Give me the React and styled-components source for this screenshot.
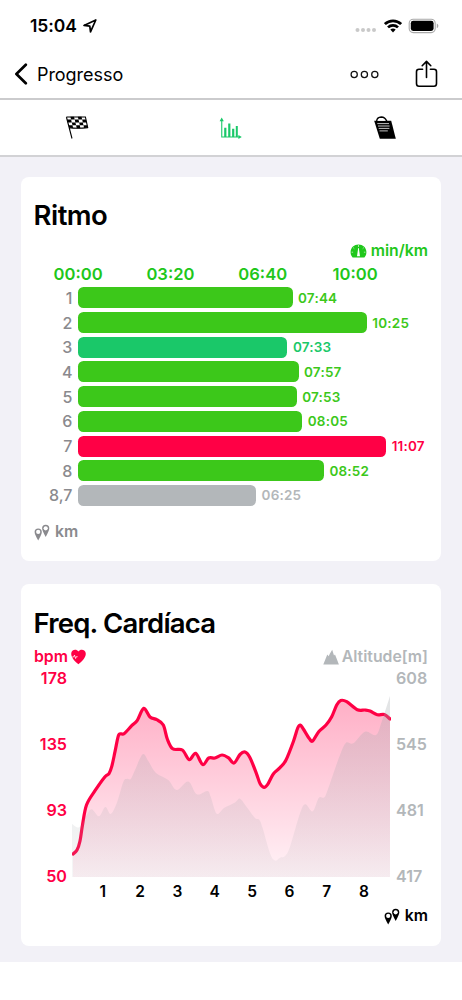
import React from 'react'
import styled, { createGlobalStyle } from 'styled-components'

const GlobalStyle = createGlobalStyle`
    * {
        box-sizing: border-box;
    }
    body {
        margin: 0;
        background-color: #fff;
        color: #000;
        font-family: Inter, "Liberation Sans", sans-serif;
    }
    svg {
        display: block;
        flex: none;
    }
`

const Screen = styled.div`
    width: 462px;
    height: 1000px;
    overflow: hidden;
    display: flex;
    flex-direction: column;
`
const StatusBar = styled.div`
    height: 50px;
    padding: 1px 23px 0 30px;
    display: flex;
    align-items: center;
    justify-content: space-between;
`
const Clock = styled.div`
    display: flex;
    align-items: center;
    gap: 6px;
    font-size: 17.5px;
    font-weight: 600;
    letter-spacing: -0.05px;
`
const StatusIcons = styled.div`
    display: flex;
    align-items: center;
    gap: 6.5px;
`
const NavBar = styled.div`
    height: 50px;
    padding: 1px 24px 1px 14px;
    display: flex;
    align-items: center;
    justify-content: space-between;
    border-bottom: 2px solid #cbcbcd;
`
const NavSide = styled.div`
    display: flex;
    align-items: center;
    gap: ${props => props.$gap}px;
`
const NavTitle = styled.div`
    font-size: 18px;
    letter-spacing: -0.05px;
`
const Tabs = styled.div`
    height: 57px;
    display: grid;
    grid-template-columns: repeat(3, 1fr);
    place-items: center;
    border-bottom: 2px solid #d2d2d5;
`
const Content = styled.div`
    height: 805px;
    padding: 20px 21px 0 21px;
    background-color: #f2f1f7;
    display: flex;
    flex-direction: column;
    gap: 23px;
`
const Card = styled.div`
    height: ${props => props.$height}px;
    padding: ${props => props.$top}px 13px 0 13px;
    background-color: #fff;
    border-radius: 8px;
`
const Title = styled.div`
    height: 34px;
    line-height: 34px;
    margin-left: -0.5px;
    font-size: 27.5px;
    font-weight: 590;
    letter-spacing: ${props => props.$spacing}px;
    white-space: nowrap;
`
const Unit = styled.div`
    display: flex;
    align-items: center;
    gap: ${props => props.$gap}px;
    height: 20px;
    line-height: 20px;
    color: ${props => props.$color};
    font-size: 15.8px;
    font-weight: 575;
`
const UnitRow = styled.div`
    display: flex;
    justify-content: ${props => props.$justify};
    padding-top: ${props => props.$top}px;
`
const Scale = styled.div`
    display: flex;
    height: 26px;
    margin-left: -2px;
    line-height: 26px;
    color: #1fc71b;
    font-size: 16.6px;
    font-weight: 575;
`
const ScaleLabel = styled.div`
    width: 92.3px;
    text-align: center;
`
const Bars = styled.div`
    display: flex;
    flex-direction: column;
    gap: 3.7px;
    padding-top: 0.4px;
`
const BarRow = styled.div`
    display: flex;
    align-items: center;
    height: 21px;
`
const BarLabel = styled.div`
    width: 44.4px;
    padding-right: 6px;
    text-align: right;
    color: #8a8a8e;
    font-size: 16px;
    font-weight: 500;
`
const Bar = styled.div`
    height: 21px;
    border-radius: 5.5px;
    background-color: ${props => props.$color};
`
const BarTime = styled.div`
    padding-left: 5.5px;
    color: ${props => props.$color};
    font-size: 13.5px;
    font-weight: 570;
    letter-spacing: 0.2px;
`
const Chart = styled.div`
    display: flex;
    height: 212px;
    margin-top: 1px;
`
const Axis = styled.div`
    width: ${props => props.$width}px;
    height: 218px;
    padding-left: ${props => props.$left}px;
    display: flex;
    flex-direction: column;
    justify-content: space-between;
    color: ${props => props.$color};
    text-align: ${props => props.$align};
    font-size: 16.1px;
    line-height: 20px;
    font-weight: 575;
`
const Plot = styled.div`
    width: 318px;
    margin: 0 1px 0 5px;
    padding-top: 10px;
`
const KmLabels = styled.div`
    display: flex;
    padding: 5px 0 0 12px;
    font-size: 15.5px;
    line-height: 20px;
    font-weight: 575;
`
const KmLabel = styled.div`
    width: 37.35px;
    text-align: center;
`

const GREEN = '#3cc81a'
const TEAL = '#1ac869'
const RED = '#ff0045'
const GREY = '#b3b7ba'

const laps = [
    { km: '1', time: '07:44', color: GREEN },
    { km: '2', time: '10:25', color: GREEN },
    { km: '3', time: '07:33', color: TEAL },
    { km: '4', time: '07:57', color: GREEN },
    { km: '5', time: '07:53', color: GREEN },
    { km: '6', time: '08:05', color: GREEN },
    { km: '7', time: '11:07', color: RED },
    { km: '8', time: '08:52', color: GREEN },
    { km: '8,7', time: '06:25', color: GREY },
]

const heartRate = [
    [1, 176], [5, 172], [8, 163], [10.5, 147], [14.5, 127], [23, 112.7], [33, 98.7], [37, 95.6],
    [39.7, 88.7], [43, 73.7], [46.3, 58], [49, 55.8], [52.3, 55.5], [59.7, 47.7], [65.3, 42.3],
    [71.7, 30.4], [78, 39], [84.7, 41.7], [91.3, 47], [95.3, 61], [100.7, 70.8], [110.3, 72],
    [117.3, 81.6], [123.7, 75.3], [130.7, 86.6], [136.7, 80], [143, 80], [150, 77], [156.3, 79.7],
    [162, 85], [168, 76.5], [173, 74], [178, 79.7], [184.7, 96.3], [188, 105.5], [192, 109.3],
    [195.7, 106.3], [201.3, 96], [208, 89.7], [214, 82], [221.3, 63.7], [225.7, 50], [228.3, 47],
    [231.3, 51], [237.3, 60.5], [240.7, 63], [246.7, 53.7], [254, 47], [259.7, 38.7], [264.7, 27],
    [268.7, 22.5], [274.7, 23.7], [285.3, 31.7], [293, 32], [298, 33], [305.3, 36.7], [312.3, 36.5],
    [318, 41],
]

const altitude = [
    [0, 146], [7.3, 149.3], [14.7, 137], [19.7, 131.3], [27, 138.3], [33.3, 129], [38.7, 136],
    [44.7, 125.3], [51.3, 104], [54.7, 100.9], [58.7, 101], [63, 92], [70.7, 76.3], [76.3, 83],
    [84, 95], [96.3, 102], [104.7, 112], [116.3, 103.5], [124.7, 116.3], [135.3, 112.9],
    [138.7, 118.7], [144.7, 135.7], [152, 130], [163, 124.5], [168, 120.7], [174.7, 129],
    [183, 140], [187.3, 141.7], [190.7, 150.3], [198, 175.3], [203, 182.6], [208, 179.7],
    [213, 178], [218, 168.7], [228, 135.3], [233.3, 126.2], [240.7, 133.3], [246.7, 119.9],
    [252, 119.6], [255.3, 113], [262, 93.7], [268, 77], [274, 64.7], [281.3, 65.3], [293, 53.7],
    [304, 57], [309.7, 43.7], [318, 18],
]

const seconds = (time) => {
    const [m, s] = time.split(':')
    return Number(m) * 60 + Number(s)
}

// smooth curve going through every point
const curve = (points) => {
    let d = `M${points[0][0]} ${points[0][1]}`
    for (let i = 0; i < points.length - 1; i++) {
        const p0 = points[i - 1] || points[i]
        const p1 = points[i]
        const p2 = points[i + 1]
        const p3 = points[i + 2] || p2
        d += ` C${p1[0] + (p2[0] - p0[0]) / 6} ${p1[1] + (p2[1] - p0[1]) / 6}`
        d += ` ${p2[0] - (p3[0] - p1[0]) / 6} ${p2[1] - (p3[1] - p1[1]) / 6} ${p2[0]} ${p2[1]}`
    }
    return d
}

const LocationIcon = () => (
    <svg width="14" height="14" viewBox="0 0 14 14">
        <path d="M1 6.4 12.8 1 7.5 12.8 6.8 7.1Z" fill="none" stroke="#000" strokeWidth="1.7" strokeLinejoin="round" />
    </svg>
)

const SignalIcon = () => (
    <svg width="22" height="16" viewBox="0 0 22 16" fill="#c9c9c9">
        <circle cx="2.5" cy="12" r="2" />
        <circle cx="8" cy="12" r="2" />
        <circle cx="13.5" cy="12" r="2" />
        <circle cx="19" cy="12" r="2" />
    </svg>
)

const WifiIcon = () => (
    <svg width="18" height="14" viewBox="0 0 18 14">
        <g fill="none" stroke="#000" strokeWidth="2.7">
            <path d="M.9 5.1C5.4.8 12.6.8 17.1 5.1" />
            <path d="M4 8.4C6.8 5.7 11.2 5.7 14 8.4" />
        </g>
        <path d="M6.3 10.6Q9 8.5 11.7 10.6L9 13.4Z" />
    </svg>
)

const BatteryIcon = () => (
    <svg width="31" height="16" viewBox="0 0 31 16">
        <rect x="1.2" y="1.2" width="26" height="13.4" rx="4" fill="none" stroke="#a9a9a9" strokeWidth="1.1" />
        <rect x="2.8" y="2.8" width="22.8" height="10.2" rx="2.4" />
        <path d="M28.8 5.5Q30.4 6.2 30.4 7.8T28.8 10.2Z" fill="#a9a9a9" />
    </svg>
)

const BackIcon = () => (
    <svg width="14" height="22" viewBox="0 0 14 22">
        <path d="M11.8 1.8 2.4 11 11.8 20.2" fill="none" stroke="#000" strokeWidth="2.7" strokeLinecap="round" strokeLinejoin="round" />
    </svg>
)

const MoreIcon = () => (
    <svg width="29" height="9" viewBox="0 0 29 9" fill="none" stroke="#111" strokeWidth="1.25">
        <circle cx="4.2" cy="4.5" r="3.1" />
        <circle cx="14.4" cy="4.5" r="3.1" />
        <circle cx="24.8" cy="4.5" r="3.1" />
    </svg>
)

const ShareIcon = () => (
    <svg width="23" height="28" viewBox="0 0 23 28" fill="none" stroke="#000" strokeWidth="1.6" strokeLinecap="round" strokeLinejoin="round">
        <path d="M7.6 9.2H4Q1.5 9.2 1.5 11.7V23.5Q1.5 26.2 4 26.2H19Q21.5 26.2 21.5 23.5V11.7Q21.5 9.2 19 9.2H15.4" />
        <path d="M11.5 17.4V1.5M7.2 5.7 11.5 1.4 15.8 5.7" />
    </svg>
)

const FlagIcon = () => (
    <svg width="24" height="24" viewBox="0 0 24 24">
        <path d="M1.4 1H20.4L22.7 11.6Q12 13 4 11.6M1.4 1 7 22.5" fill="none" stroke="#000" strokeWidth="1.1" />
        <path d="M5.4 .8H9L9.7 3.6H6.1ZM12.8 .8H16.5L17.2 3.6H13.5ZM2.1 3.6H6.1L6.8 6.4H2.9ZM9.7 3.6H13.5L14.2 6.4H10.4ZM17.2 3.6H20.9L21.5 6.4H17.8ZM6.8 6.4H10.4L11.1 9.2H7.5ZM14.2 6.4H17.8L18.5 9.2H14.8ZM3.6 9.2H7.5L8.1 12.1 4.2 11.4ZM11.1 9.2H14.8L15.4 12.2H11.7ZM18.5 9.2H22.1L22.8 11.6 19.1 12.1Z" />
    </svg>
)

const ChartIcon = () => (
    <svg width="24" height="24" viewBox="0 0 24 24" fill="#1ac869">
        <path d="M2.2 4H3.3V20.4H20V21.5H2.2Z" />
        <path d="M2.7 1.6 4.8 5.2H.6ZM22.8 21 19.4 19V23Z" />
        <path d="M5.2 11.7H7.4V21H5.2ZM9.2 7.6H11.4V21H9.2ZM13.1 12.7H15.3V21H13.1ZM16.8 10H18.8V21H16.8Z" />
    </svg>
)

const ReportIcon = () => (
    <svg width="24" height="24" viewBox="0 0 24 24">
        <path d="M1.2 4.8H18.2L22.8 22.8H6.8Z" />
        <path d="M3.6 5.2Q4 1.2 8.2 1 12.2 1.2 13.8 5.2" fill="none" stroke="#000" strokeWidth="1.3" />
        <path d="M4.6 4.7Q5.2 2.7 8.2 2.7 11.2 2.7 12.5 4.7Z" fill="#fff" />
        <path d="M4.3 7.6H16M5 10H16.6M5.7 12.4H16.4M6.5 14.9H14.8" stroke="#d8d8d8" strokeWidth=".9" />
    </svg>
)

const GaugeIcon = () => (
    <svg width="17" height="17" viewBox="0 0 17 17">
        <path d="M2.6 14.4Q.4 12.2.6 8.8C.8 4.4 4.2 1.4 8.5 1.4S16.2 4.4 16.4 8.8Q16.6 12.2 14.4 14.4Z" fill="#1fc71b" />
        <path d="M8.2 5H8.8L10 13.2H7ZM8.1 2.2H8.9V3.8H8.1Z" fill="#fff" />
        <path d="M3.2 4.6 4.3 5.7M13.8 4.6 12.7 5.7M1.6 9.2H3.1M15.4 9.2H13.9" stroke="#fff" strokeWidth=".6" />
    </svg>
)

const PinsIcon = ({ color }) => (
    <svg width="16" height="17" viewBox="0 0 16 17">
        <path d="M.6 8A3.6 3.6 0 0 1 7.8 8Q7.8 10.4 4.2 16.4.6 10.4.6 8Z" fill={color} />
        <circle cx="4.2" cy="7.9" r="2.1" fill="#fff" />
        <path d="M8.1 4.3A3.6 3.6 0 0 1 15.3 4.3Q15.3 6.7 11.7 12.9 8.1 6.7 8.1 4.3Z" fill={color} />
        <circle cx="11.7" cy="4.3" r="2.1" fill="#fff" />
    </svg>
)

const HeartIcon = () => (
    <svg width="15" height="16" viewBox="0 0 15 16">
        <path d="M7.4 15.3C4.4 12.6.2 9 .2 4.7.2.8 5.3-.7 7.4 2.6 9.6-.7 14.8.8 14.8 4.7 14.8 9 10.4 12.6 7.4 15.3Z" fill={RED} />
        <path d="M1.2 8H2.6L3.5 6.1 4.6 9.5 5.3 7.7H6.6" fill="none" stroke="#fff" strokeWidth=".8" />
    </svg>
)

const MountainIcon = () => (
    <svg width="16" height="16" viewBox="0 0 16 16">
        <path d="M.3 15.5 3.4 7.8 4.3 5.4 5.7 7.2 6.8 4.8 7.6 3.6 9.2.8 10.3 4.2 11 6.6 12 5.6 13.2 8.6 15.9 15.5Z" fill={GREY} />
    </svg>
)

const HeartChart = () => (
    <svg width="319" height="199" viewBox="0 0 319 199">
        <defs>
            <linearGradient id="hr" gradientUnits="userSpaceOnUse" x1="0" y1="22" x2="0" y2="199">
                <stop offset="0" stopColor="#ffafc6" />
                <stop offset="1" stopColor="#fff3f7" />
            </linearGradient>
            <linearGradient id="alt" gradientUnits="userSpaceOnUse" x1="0" y1="18" x2="0" y2="199">
                <stop offset="0" stopColor="#a4a9ad" stopOpacity="0.32" />
                <stop offset="1" stopColor="#a4a9ad" stopOpacity="0.1" />
            </linearGradient>
        </defs>
        <path d={`${curve(heartRate)} V199 H1 Z`} fill="url(#hr)" />
        <path d={curve(heartRate)} fill="none" stroke={RED} strokeWidth="3.2" strokeLinecap="round" />
        <path d={`${curve(altitude)} V199 H0 Z`} fill="url(#alt)" />
    </svg>
)

const PaceCard = () => {
    return (
        <Card $height={384} $top={21}>
            <Title $spacing={-0.5}>Ritmo</Title>
            <UnitRow $justify="flex-end" $top={9}>
                <Unit $color="#1fc71b" $gap={4}><GaugeIcon />min/km</Unit>
            </UnitRow>
            <Scale>
                {['00:00', '03:20', '06:40', '10:00'].map(label => <ScaleLabel key={label}>{label}</ScaleLabel>)}
            </Scale>
            <Bars>
                {laps.map(lap => (
                    <BarRow key={lap.km}>
                        <BarLabel>{lap.km}</BarLabel>
                        <Bar $color={lap.color} style={{ width: `${seconds(lap.time) * 0.4615}px` }} />
                        <BarTime $color={lap.color}>{lap.time}</BarTime>
                    </BarRow>
                ))}
            </Bars>
            <UnitRow $justify="flex-start" $top={16.3}>
                <Unit $color="#8a8a8e" $gap={5}><PinsIcon color="#8a8a8e" />km</Unit>
            </UnitRow>
        </Card>
    )
}

const HeartCard = () => {
    return (
        <Card $height={362} $top={22}>
            <Title $spacing={-0.8}>Freq. Cardíaca</Title>
            <UnitRow $justify="space-between" $top={7}>
                <Unit $color={RED} $gap={3}>bpm<HeartIcon /></Unit>
                <Unit $color={GREY} $gap={3}><MountainIcon />Altitude[m]</Unit>
            </UnitRow>
            <Chart>
                <Axis $width={33} $left={0} $align="right" $color={RED}>
                    <div>178</div>
                    <div>135</div>
                    <div>93</div>
                    <div>50</div>
                </Axis>
                <Plot>
                    <HeartChart />
                    <KmLabels>
                        {[1, 2, 3, 4, 5, 6, 7, 8].map(km => <KmLabel key={km}>{km}</KmLabel>)}
                    </KmLabels>
                </Plot>
                <Axis $width={37} $left={5} $align="left" $color={GREY}>
                    <div>608</div>
                    <div>545</div>
                    <div>481</div>
                    <div>417</div>
                </Axis>
            </Chart>
            <UnitRow $justify="flex-end" $top={26}>
                <Unit $color="#000" $gap={5}><PinsIcon color="#000" />km</Unit>
            </UnitRow>
        </Card>
    )
}

const App = () => {
    return (
        <Screen>
            <GlobalStyle />
            <StatusBar>
                <Clock>15:04<LocationIcon /></Clock>
                <StatusIcons>
                    <SignalIcon />
                    <WifiIcon />
                    <BatteryIcon />
                </StatusIcons>
            </StatusBar>
            <NavBar>
                <NavSide $gap={9}>
                    <BackIcon />
                    <NavTitle>Progresso</NavTitle>
                </NavSide>
                <NavSide $gap={36}>
                    <MoreIcon />
                    <ShareIcon />
                </NavSide>
            </NavBar>
            <Tabs>
                <FlagIcon />
                <ChartIcon />
                <ReportIcon />
            </Tabs>
            <Content>
                <PaceCard />
                <HeartCard />
            </Content>
        </Screen>
    )
}

export default App
